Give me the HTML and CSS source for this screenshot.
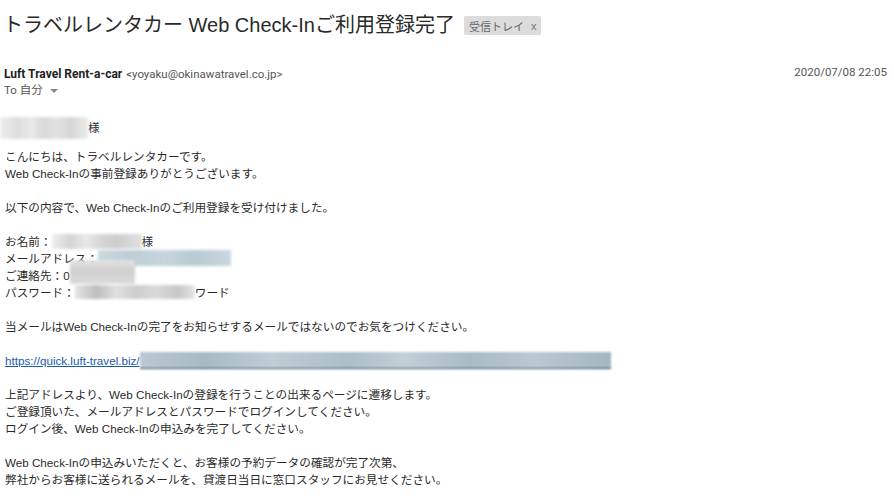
FILE: index.html
```html
<!DOCTYPE html>
<html lang="ja">
<head>
<meta charset="utf-8">
<title>トラベルレンタカー Web Check-Inご利用登録完了</title>
<link rel="stylesheet" href="styles.css">
</head>
<body>
<div class="mail">
  <div class="subject">
    <h1 class="title">トラベルレンタカー Web Check-Inご利用登録完了</h1>
    <span class="chip">受信トレイ<span class="chip-x">x</span></span>
  </div>
  <div class="header">
    <div class="from"><span class="sender">Luft Travel Rent-a-car</span> <span class="addr">&lt;yoyaku@okinawatravel.co.jp&gt;</span></div>
    <div class="date">2020/07/08 22:05</div>
  </div>
  <div class="to">To 自分 <span class="caret"></span></div>

  <div class="body">
    <p class="greet"><span class="blur blur-name"></span>様</p>
    <p>こんにちは、トラベルレンタカーです。<br>Web Check-Inの事前登録ありがとうございます。</p>
    <p>以下の内容で、Web Check-Inのご利用登録を受け付けました。</p>
    <p>お名前：<span class="blur blur-name2"></span>様<br>メールアドレス：<span class="blur blur-mail"></span><br>ご連絡先：0<span class="blur blur-tel"></span><br>パスワード：<span class="blur blur-pass"></span>ワード</p>
    <p>当メールはWeb Check-Inの完了をお知らせするメールではないのでお気をつけください。</p>
    <p><a class="link" href="#">https://quick.luft-travel.biz/<span class="blur blur-url"></span></a></p>
    <p>上記アドレスより、Web Check-Inの登録を行うことの出来るページに遷移します。<br>ご登録頂いた、メールアドレスとパスワードでログインしてください。<br>ログイン後、Web Check-Inの申込みを完了してください。</p>
    <p>Web Check-Inの申込みいただくと、お客様の予約データの確認が完了次第、<br>弊社からお客様に送られるメールを、貸渡日当日に窓口スタッフにお見せください。</p>
  </div>
</div>
</body>
</html>
```
FILE: styles.css
```css
html, body {
  margin: 0;
  padding: 0;
  background: #fff;
}
.mail {
  width: 894px;
  height: 500px;
  overflow: hidden;
  font-family: "Liberation Sans", "Noto Sans CJK JP", sans-serif;
  color: #222;
}
.subject {
  height: 50px;
  display: flex;
  align-items: center;
  padding-left: 3px;
  gap: 9px;
}
.title {
  margin: 0;
  font-size: 20px;
  font-weight: normal;
  line-height: 24px;
  color: #2a2a2a;
}
.chip {
  display: inline-flex;
  align-items: center;
  height: 19px;
  padding: 0 5px 0 5px;
  background: #dcdcdc;
  border-radius: 2px;
  font-size: 11px;
  color: #666;
  margin-top: 1px;
}
.chip-x {
  margin-left: 7px;
  font-size: 11px;
  color: #777;
}
.header {
  display: flex;
  justify-content: space-between;
  align-items: center;
  margin-top: 13px;
  height: 18px;
  padding: 0 7px 0 4px;
  font-family: Roboto, "Noto Sans CJK JP", sans-serif;
}
.sender {
  font-weight: bold;
  font-size: 12px;
  color: #222;
}
.addr {
  font-size: 11.5px;
  color: #555;
}
.date {
  font-size: 11.5px;
  color: #555;
}
.to {
  height: 18px;
  line-height: 18px;
  padding-left: 4px;
  font-size: 11.5px;
  color: #555;
  font-family: Roboto, "Noto Sans CJK JP", sans-serif;
}
.caret {
  display: inline-block;
  width: 0;
  height: 0;
  border-left: 4px solid transparent;
  border-right: 4px solid transparent;
  border-top: 4px solid #888;
  margin-left: 4px;
  vertical-align: middle;
}
.body {
  padding-left: 5px;
  margin-top: 20px;
  font-size: 11.65px;
  line-height: 17px;
  color: #2a2a2a;
}
.body p {
  margin: 0 0 17px 0;
}
.body p.greet {
  margin-bottom: 12px;
}
.link {
  color: #1a5aa8;
  text-decoration: underline;
}
.blur {
  display: inline-block;
  vertical-align: top;
  height: 17px;
  filter: blur(1.5px);
}
.blur-name {
  width: 88px;
  margin-left: -5px;
  height: 22px;
  margin-top: -2px;
  margin-bottom: -3px;
  background: linear-gradient(90deg, #ededed 0%, #dedede 20%, #e9e9e9 36%, #d8d8d8 50%, #e3e3e3 64%, #d6d6d6 80%, #ebebeb 100%);
}
.blur-name2 {
  width: 90px;
  height: 15px;
  margin-top: 1px;
  background: linear-gradient(90deg, #eeeeee 0%, #d4d4d4 20%, #e8e8e8 38%, #d6d6d6 54%, #cdcdcd 72%, #e0e0e0 100%);
}
.blur-mail {
  width: 133px;
  height: 16px;
  background: linear-gradient(90deg, #cbd9df 0%, #bccdd6 25%, #c6d5db 50%, #b8cad3 72%, #c9d7dc 100%);
}
.blur-tel {
  width: 65px;
  height: 24px;
  margin-top: -7px;
  margin-bottom: -7px;
  background: linear-gradient(180deg, #e3e3e3 0%, #cfcfcf 45%, #dadada 100%);
}
.blur-pass {
  width: 120px;
  height: 14px;
  margin-top: 1px;
  background: linear-gradient(90deg, #e4e4e4 0%, #bdbdbd 18%, #e0e0e0 34%, #cdcdcd 50%, #d9d9d9 68%, #c7c7c7 86%, #e6e6e6 100%);
}
.blur-url {
  width: 471px;
  height: 16px;
  background: linear-gradient(90deg, #b9c9d0 0%, #a8bac4 14%, #bfced5 28%, #acbec7 44%, #c2d0d6 56%, #a9bbc5 70%, #bac9d0 84%, #a3b6c0 100%);
  border-bottom: 1px solid #2e4c5c;
  filter: blur(0.8px);
}
```
